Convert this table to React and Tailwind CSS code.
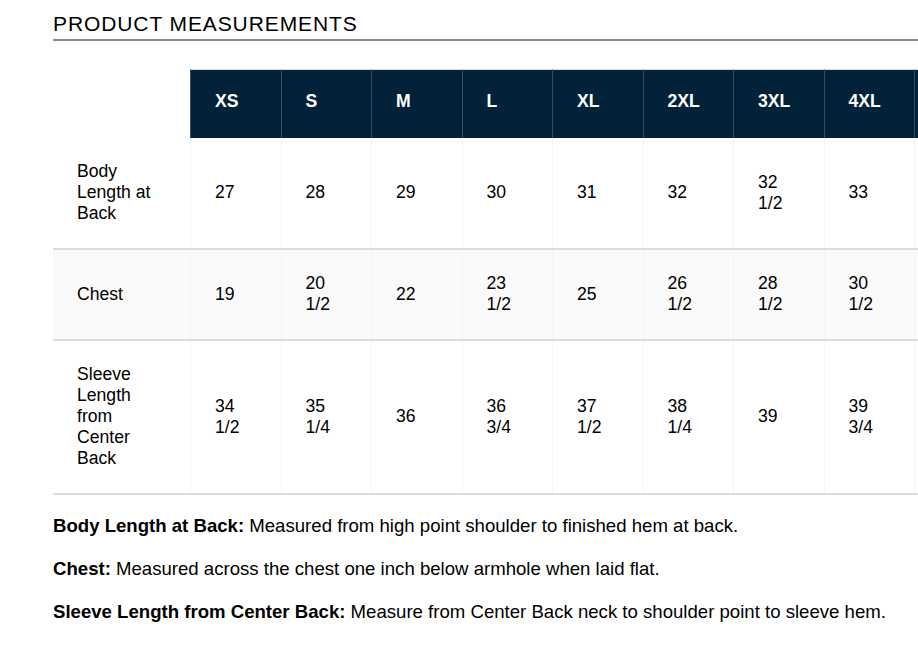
import React from "react";

const sizes = ["XS", "S", "M", "L", "XL", "2XL", "3XL", "4XL", ""];
const rows = [
  { label: "Body Length at Back", values: ["27", "28", "29", "30", "31", "32", "32 1/2", "33", ""], bg: "bg-white" },
  { label: "Chest", values: ["19", "20 1/2", "22", "23 1/2", "25", "26 1/2", "28 1/2", "30 1/2", ""], bg: "bg-[#fafafa]" },
  { label: "Sleeve Length from Center Back", values: ["34 1/2", "35 1/4", "36", "36 3/4", "37 1/2", "38 1/4", "39", "39 3/4", ""], bg: "bg-white" },
];

export default function App() {
  return (
    <div className="w-[918px] h-[655px] overflow-hidden bg-white text-black font-['Liberation_Sans',Arial,sans-serif]">
      <div className="w-[1005px] pl-[53px]">
        <h2 className="pt-[12px] pb-[3px] text-[21px] leading-[24px] tracking-[0.9px] font-normal border-b-2 border-[#888888]">
          PRODUCT MEASUREMENTS
        </h2>

        <div className="mt-[28px] text-[17.6px] leading-[21px]">
          <div className="grid grid-cols-[137px_repeat(9,90.5px)]">
            <div className="bg-white" />
            {sizes.map((s, i) => (
              <div
                key={i}
                className="flex items-center px-6 pt-[21px] pb-[26px] bg-[#012239] border-t border-t-[#dddddd] border-l border-l-[#3a4e5f] text-white font-bold"
              >
                {s}
              </div>
            ))}
          </div>

          {rows.map((r) => (
            <div
              key={r.label}
              className={`grid grid-cols-[137px_repeat(9,90.5px)] border-b-2 border-[#dddddd] ${r.bg}`}
            >
              <div className="flex items-center px-6 pt-[23px] pb-[24px]">{r.label}</div>
              {r.values.map((v, i) => (
                <div
                  key={i}
                  className="flex items-center px-6 pt-[23px] pb-[24px] border-l border-[#f4f4f4]"
                >
                  {v}
                </div>
              ))}
            </div>
          ))}

          <div className="mt-[20px] flex flex-col gap-[21px] text-[18.6px] leading-[22px]">
            <p>
              <span className="font-bold">Body Length at Back:</span> Measured from high point shoulder to finished hem at back.
            </p>
            <p>
              <span className="font-bold">Chest:</span> Measured across the chest one inch below armhole when laid flat.
            </p>
            <p>
              <span className="font-bold">Sleeve Length from Center Back:</span> Measure from Center Back neck to shoulder point to sleeve hem.
            </p>
          </div>
        </div>
      </div>
    </div>
  );
}
